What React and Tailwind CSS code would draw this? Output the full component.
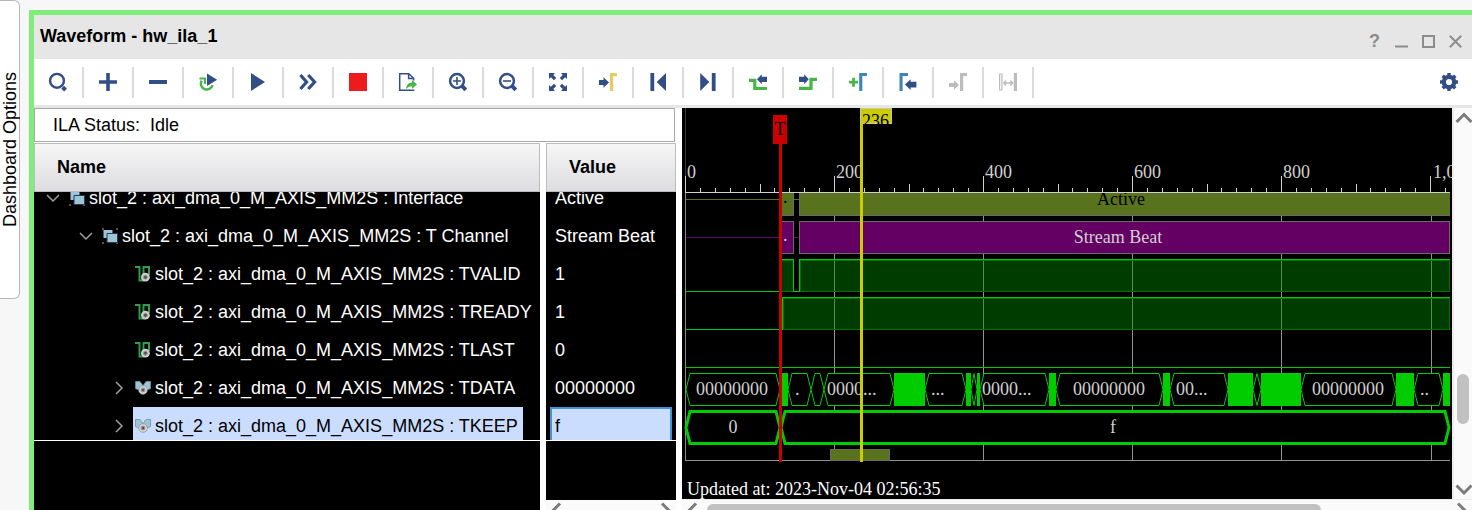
import React from "react";

const NAVY = "#324e86";
const GREEN = "#47b649";
const GRAY = "#bcbcbc";

function Glyph({ children }) {
  return (
    <svg viewBox="0 0 20 20" className="h-5 w-5" fill="none" aria-hidden="true">
      {children}
    </svg>
  );
}

const tools = [
  ["Find", <><circle cx="9" cy="8.8" r="6.9" stroke={NAVY} strokeWidth="2.4" /><path d="M14.6 15.200l3 2.800" stroke={NAVY} strokeWidth="4" /></>],
  ["Add", <path d="M1 10H19M10 1V19" stroke={NAVY} strokeWidth="3.6" />],
  ["Remove", <path d="M1 10H19" stroke={NAVY} strokeWidth="4" />],
  ["Run trigger repeatedly", <><path d="M3.600 8.600A6 6 0 1 0 14.6 13.2" stroke={GREEN} strokeWidth="2.4" /><path d="M1.5 6.6H7V12" stroke={GREEN} strokeWidth="2" /><path d="M9 1.5L19.2 7.7L9 14z" fill={NAVY} /></>],
  ["Run trigger", <path d="M3 1L17 10L3 19z" fill={NAVY} />],
  ["Run immediately", <path d="M2.4 3L8.6 10L2.4 17M10.2 3L16.6 10L10.2 17" stroke={NAVY} strokeWidth="3.2" />],
  ["Stop", <path d="M1 1H19V19H1z" fill="#ed1c1c" />],
  ["Export", <><path d="M15.6 8.5V6.2L10.8 1.7H1.7V18.3H15.6V17.4M10.6 2V6.6H15.4" stroke={NAVY} strokeWidth="1.5" /><path d="M8 17.2c.3-4 2.4-6.4 6-6.6V8l5 4.6-5 4.2v-2.6c-2.600 0-4.300.9-6 3z" fill={GREEN} /></>],
  ["Zoom in", <><circle cx="9" cy="9" r="6.900" stroke={NAVY} strokeWidth="2.500" /><path d="M5 9H13M9 5V13" stroke={NAVY} strokeWidth="1.6" /><path d="M14.2 14.2l3.600 3.600" stroke={NAVY} strokeWidth="4" /></>],
  ["Zoom out", <><circle cx="9" cy="9" r="6.900" stroke={NAVY} strokeWidth="2.500" /><path d="M5 9H13" stroke={NAVY} strokeWidth="1.6" /><path d="M14.2 14.2l3.600 3.600" stroke={NAVY} strokeWidth="4" /></>],
  ["Zoom fit", <path d="M1 1H7L5.300 2.900L8.300 5.900L5.900 8.300L2.900 5.300L1 7zM19 1V7L17.100 5.300L14.100 8.300L11.700 5.900L14.700 2.900L13 1zM1 19V13L2.900 14.700L5.900 11.700L8.300 14.100L5.300 17.100L7 19zM19 19H13L14.700 17.100L11.700 14.100L14.100 11.700L17.100 14.700L19 13z" fill={NAVY} />],
  ["Go to cursor", <><path d="M1 8H5.500V5.200L11 10.500L5.500 15.800V13H1z" fill={NAVY} /><path d="M12 1H19V4.300H15.200V19H12z" fill="#e5cb66" /></>],
  ["Go to start", <path d="M2.400 1H6.200V19H2.400zM18 1V19L8.700 10z" fill={NAVY} />],
  ["Go to end", <path d="M13.800 1H17.600V19H13.800zM2.200 1V19L11.300 10z" fill={NAVY} />],
  ["Previous transition", <><path d="M1 8.300H6.800V16.500H19" stroke={GREEN} strokeWidth="3.2" /><path d="M9 7.300L13.800 2.300V4.800H19V10H13.800V12.300z" fill={NAVY} /></>],
  ["Next transition", <><path d="M1 16.400H13V7.400H19" stroke={GREEN} strokeWidth="3.2" /><path d="M10.800 7.300L6.200 2.300V4.800H1V10H6.200V12.300z" fill={NAVY} /></>],
  ["Add marker", <><path d="M1 10.200H10M5.500 5.700V14.700" stroke={GREEN} strokeWidth="2.800" /><path d="M11.200 1H19V4H14.300V19H11.200z" fill="#3a86bb" /></>],
  ["Previous marker", <><path d="M1.500 1H10V4H4.600V19H1.500z" fill="#3a86bb" /><path d="M7 12.600L12.600 7.200V9.800H18.400V15.400H12.600V18z" fill={NAVY} /></>],
  ["Next marker", <><path d="M1 11H6V8.300L11 13L6 17.700V15H1z" fill={GRAY} /><path d="M12 1H19V4H15.200V19H12z" fill={GRAY} /></>],
  ["Swap cursors", <><path d="M1.600 2H3.900V18H1.600z" stroke={GRAY} strokeWidth="1.2" /><path d="M15.800 1H19V19H15.800z" fill={GRAY} /><path d="M6 11H14.500M8.200 8.500L5.700 11L8.200 13.500M12.300 8.500L14.800 11L12.300 13.500" stroke={GRAY} strokeWidth="1.300" /></>],
];

function GroupIcon() {
  return (
    <svg viewBox="0 0 16 16" className="h-4 w-4 shrink-0" aria-hidden="true">
      <path d="M0 0h2v2H0zM14 0h2v2h-2zM0 14h2v2H0zM14 14h2v2h-2z" fill="#555" />
      <path d="M1.500 2h9v8h-9z" fill="#9cc5dc" />
      <path d="M5 5.500h10.500v9H5z" fill="#9cc5dc" stroke="#263a4a" />
    </svg>
  );
}

function SignalIcon() {
  return (
    <svg viewBox="0 0 16 16" className="h-4 w-4 shrink-0" fill="none" aria-hidden="true">
      <path d="M0 1H4.500V14.500H8.500V1H14V9" stroke="#2f9e48" strokeWidth="2" />
      <circle cx="10.400" cy="11.200" r="4.400" fill="#cfcfcf" />
      <circle cx="10.400" cy="11.200" r="2" fill="#555" stroke="#999" />
    </svg>
  );
}

function BusIcon() {
  return (
    <svg viewBox="0 0 16 16" className="h-4 w-4 shrink-0" aria-hidden="true">
      <path d="M.5 1.500H5L7.500 5V9.500H2.500L.5 8.500zM15.500 1.500H11L8.500 5V9.500H13.500L15.500 8.500z" fill="#9cc5dc" stroke="#6f8e9c" strokeWidth=".8" />
      <circle cx="8" cy="10" r="4.400" fill="#d2d2d2" stroke="#8a8a8a" strokeWidth=".6" />
      <circle cx="8" cy="10" r="1.900" fill="#555" stroke="#999" />
    </svg>
  );
}

const BUS = "slot_2 : axi_dma_0_M_AXIS_MM2S : ";
const signals = [
  { name: BUS + "Interface", value: "Active", indent: "pl-[9px]", open: true, Icon: GroupIcon },
  { name: BUS + "T Channel", value: "Stream Beat", indent: "pl-[42px]", open: true, Icon: GroupIcon },
  { name: BUS + "TVALID", value: "1", indent: "pl-[75px]", Icon: SignalIcon },
  { name: BUS + "TREADY", value: "1", indent: "pl-[75px]", Icon: SignalIcon },
  { name: BUS + "TLAST", value: "0", indent: "pl-[75px]", Icon: SignalIcon },
  { name: BUS + "TDATA", value: "00000000", indent: "pl-[75px]", open: false, Icon: BusIcon },
  { name: BUS + "TKEEP", value: "f", indent: "pl-[75px]", open: false, selected: true, Icon: BusIcon },
];

function Toggle({ open, name }) {
  if (open === undefined) return <span className="w-5 shrink-0" />;
  return (
    <button className="flex w-5 shrink-0 justify-center" aria-label={"Toggle " + name} aria-expanded={open}>
      <svg viewBox="0 0 14 14" className="h-[14px] w-[14px]" fill="none" stroke="#a0a0a0" strokeWidth="1.500" aria-hidden="true">
        <path d={open ? "M1 4L7 10L13 4" : "M4 1L10 7L4 13"} />
      </svg>
    </button>
  );
}

function ColumnHead({ children }) {
  return (
    <div className="h-[49px] shrink-0 border border-[#bdbdbd] bg-linear-to-b from-[#f6f6f6] to-[#dddce0] px-[22px] font-bold leading-[47px]">
      {children}
    </div>
  );
}

function Arrow({ d }) {
  return (
    <svg viewBox="0 0 20 20" className="h-5 w-5 shrink-0" fill="none" stroke="#7b7b7b" strokeWidth="3" aria-hidden="true">
      <path d={d} />
    </svg>
  );
}

const LEFT = "M14 3.500L6.500 11L14 18.500";
const RIGHT = "M6 3.500L13.500 11L6 18.500";

function NamePanel() {
  return (
    <section className="flex min-h-0 w-[506px] flex-col">
      <ColumnHead>Name</ColumnHead>
      <div className="flex min-h-0 grow flex-col bg-black text-white">
        <ul className="h-[249px] overflow-hidden border-b border-white">
          {signals.map(({ name, indent, open, selected, Icon }) => (
            <li key={name} className={"flex h-[38px] items-center gap-1 first:-mt-[13px] " + indent}>
              <Toggle open={open} name={name} />
              <span className={"flex h-full items-center gap-1 whitespace-nowrap pl-[2px] pr-[5px] " + (selected ? "bg-[#cbddff] text-black" : "")}>
                <Icon />
                {name}
              </span>
            </li>
          ))}
        </ul>
      </div>
    </section>
  );
}

function ValuePanel() {
  return (
    <section className="flex min-h-0 w-[130px] flex-col">
      <ColumnHead>Value</ColumnHead>
      <div className="min-h-0 grow bg-black text-white">
        <ul className="h-[249px] overflow-hidden border-b border-white">
          {signals.map(({ name, value, selected }) => (
            <li
              key={name}
              className={
                "mx-1 flex h-[38px] items-center whitespace-nowrap first:-mt-[13px] " +
                (selected ? "border-2 border-[#4094d4] bg-[#cbddff] pl-[3px] text-black" : "pl-[5px]")
              }
            >
              {value}
            </li>
          ))}
        </ul>
      </div>
      <div className="flex h-[10px] shrink-0 items-start justify-between overflow-hidden bg-[#fafafa]">
        <Arrow d={LEFT} />
        <Arrow d={RIGHT} />
      </div>
    </section>
  );
}

const majors = [[3, "0"], [152, "200"], [301, "400"], [450, "600"], [599, "800"], [749, "1,000"]];
const ticks = Array.from({ length: 52 }, (_, i) => i);
// [start, end, label, label start]
const dataCells = [
  [4, 98, "00000000", 14], [106, 129, ".", 113], [129, 142, ""], [142, 212, "0000...", 145], [243, 284, "...", 249],
  [289, 295, ""], [298, 367, "0000...", 300], [374, 481, "00000000", 391], [488, 546, "00...", 494], [571, 579, ""],
  [619, 714, "00000000", 630], [732, 761, "..", 738],
];
const dataBusy = [[100, 106], [212, 243], [284, 289], [295, 298], [367, 374], [481, 488], [546, 571], [579, 619], [714, 732], [761, 768]];

function hex(a, b, top, bottom, slant) {
  const s = Math.min(slant, (b - a) / 2);
  const mid = (top + bottom) / 2;
  return `M${a} ${mid}L${a + s} ${top}H${b - s}L${b} ${mid}L${b - s} ${bottom}H${a + s}z`;
}

function Waves() {
  return (
    <svg width="770" height="391" viewBox="0 0 770 391" className="block shrink-0" fontFamily='"Liberation Serif", serif' fontSize="18" role="img" aria-label="Waveform">
      <defs>
        <clipPath id="rows"><path d="M0 85H770V391H0z" /></clipPath>
        <clipPath id="flag"><path d="M178 0H210V16H178z" /></clipPath>
      </defs>
      <g shapeRendering="crispEdges">
        <path d="M3 0H4V68H3z" fill="#383838" />
        <path d="M3 68H4V352H3z" fill="#8a8a8a" />
        {majors.slice(1).map(([x]) => <rect key={x} x={x} y="85" width="1" height="267" fill="#929292" />)}
        <path d="M3 352H768V353H3z" fill="#929292" />
        {ticks.map((i) => (
          <rect key={i} x={Math.round(3 + i * 14.9)} y={i % 10 === 0 ? 68 : i % 5 === 0 ? 76 : 80} width="1" height={i % 10 === 0 ? 16 : i % 5 === 0 ? 8 : 4} fill="#d0d0d0" />
        ))}
        <path d="M3 84H768V85H3z" fill="#d0d0d0" />

        <path d="M4 91H117V92H4z" fill="#58721d" />
        <path d="M99 85H111V108H99zM117 85H768V108H117z" fill="#58721d" />
        <path d="M111 85h1v23h-1zM99 107H112V108H99zM117 85h1v23h-1zM117 107H768V108H117z" fill="#6a6a6a" />

        <path d="M4 129H117V130H4z" fill="#640064" />
        <path d="M99 113H112V146H99zM117 113H768V146H117z" fill="#6a6a6a" />
        <path d="M100 114H111V145H100zM118 114H767V145H118z" fill="#640064" />

        <path d="M99 151H111V184H99zM118 151H768V184H118zM101 189H768V222H101z" fill="#003c00" />
        {majors.slice(1).map(([x]) => <path key={x} d={`M${x} 153h1v30h-1zM${x} 191h1v30h-1z`} fill="#4f8f4f" />)}
        <path d="M99 152H111V153H99zM118 152H768V153H118zM99 183H111V184H99zM118 183H768V184H118zM101 190H768V191H101zM101 221H768V222H101zM118 153h1v30h-1zM101 191h1v30h-1zM767 152h1v32h-1zM767 190h1v32h-1z" fill="#007000" />
        <path d="M4 183H99V184H4zM99 151H112V152H99zM111 151H112V184H111zM111 183H118V184H111zM117 151H118V184H117zM117 151H768V152H117z" fill="#00cc00" />
        <path d="M4 221H101V222H4zM100 189H101V222H100zM100 189H768V190H100zM4 259H768V260H4z" fill="#00cc00" />

        {dataBusy.map(([a, b]) => <rect key={a} x={a} y="265" width={b - a} height="33" fill="#00cc00" />)}
      </g>
      {dataCells.map(([a, b]) => <path key={a} d={hex(a, b, 265.5, 297.5, 4)} fill="#000" stroke="#00cc00" />)}
      <path d={hex(4, 98, 303.5, 335.5, 4)} fill="#000" stroke="#00cc00" strokeWidth="3" />
      <path d={hex(99, 767, 303.5, 335.5, 4)} fill="#000" stroke="#00cc00" strokeWidth="3" />
      <path d="M148.500 341.500H207.500V352.500H148.500z" fill="#58721d" stroke="#6a6a6a" shapeRendering="crispEdges" />

      <g fill="#d0d0d0">
        {majors.map(([x, label]) => <text key={x} x={x + 2} y="70">{label}</text>)}
        <text x="101" y="133">.</text>
        <text x="436" y="135" textAnchor="middle">Stream Beat</text>
        {dataCells.filter((cell) => cell[2]).map(([a, , label, x]) => <text key={a} x={x} y="287">{label}</text>)}
        <text x="51" y="325" textAnchor="middle">0</text>
        <text x="431" y="325" textAnchor="middle">f</text>
      </g>
      <g clipPath="url(#rows)">
        <text x="101" y="95">.</text>
        <text x="439" y="97" textAnchor="middle">Active</text>
      </g>
      <text x="5" y="387" fill="#fff">Updated at: 2023-Nov-04 02:56:35</text>

      <path d="M91 7H105V36H100V354H97V36H91z" fill="#cc0000" />
      <text x="98" y="27" textAnchor="middle">T</text>
      <path d="M178 0H210V16H181V354H178z" fill="#cccc00" />
      <path d="M178.500 16V.5H209.500V15.500H181" fill="none" stroke="#c8c8a0" />
      <text x="180" y="19" clipPath="url(#flag)">236</text>
    </svg>
  );
}

function WavePanel() {
  return (
    <section className="flex min-w-0 flex-1 flex-col">
      <div className="flex min-h-0 grow">
        <div className="min-w-0 flex-1 overflow-hidden bg-black">
          <Waves />
        </div>
        <div className="flex w-5 flex-col items-center border-l-2 border-[#ececec] bg-[#fafafa]">
          <Arrow d="M3.500 14L11 6.500L18.500 14" />
          <div className="flex-[9]" />
          <div className="h-[50px] w-3 rounded-md bg-[#c1c1c1]" />
          <div className="flex-[2]" />
          <Arrow d="M3.500 6.500L11 14L18.500 6.500" />
        </div>
      </div>
      <div className="flex h-[11px] shrink-0 items-start overflow-hidden border-t border-[#ececec] bg-[#fafafa]">
        <Arrow d={LEFT} />
        <div className="min-w-0 flex-1 px-[5px] pt-1">
          <div className="h-3 w-[83%] rounded-md bg-[#c1c1c1]" />
        </div>
        <Arrow d={RIGHT} />
      </div>
    </section>
  );
}

const windowButtons = [
  ["Minimize", <path d="M0 11.500H13" strokeWidth="2" />],
  ["Maximize", <path d="M1 1H12V12H1z" strokeWidth="2" />],
  ["Close", <path d="M.8.8L12.200 12.200M12.200.8L.8 12.200" strokeWidth="2" />],
];

export default function App() {
  return (
    <div className="flex h-screen items-stretch overflow-hidden bg-[#f7f7f7] text-[18px] leading-5 text-black [font-family:'Liberation_Sans',Arial,sans-serif]">
      <aside className="w-5 shrink-0">
        <button className="flex w-5 items-center justify-center rounded-r-md border border-l-0 border-[#b8b8b8] bg-white py-[71px]">
          <span className="rotate-180 whitespace-nowrap leading-[18px] [writing-mode:vertical-rl]">Dashboard Options</span>
        </button>
      </aside>

      <main className="ml-[9px] mt-[10px] flex min-w-0 flex-1 flex-col border-l-[5px] border-t-[5px] border-[#80ed7a] bg-white">
        <header className="flex h-11 shrink-0 items-center bg-[#e6e6e6] pl-[6px] pr-[10px]">
          <h1 className="flex-1 pb-[2px] font-bold">Waveform - hw_ila_1</h1>
          <div className="flex items-center gap-[14px] pt-2">
            <button aria-label="Help" className="w-[13px] text-center font-bold text-[#8c8c8c]">?</button>
            {windowButtons.map(([label, shape]) => (
              <button key={label} aria-label={label}>
                <svg viewBox="0 0 13 13" className="h-[13px] w-[13px]" fill="none" stroke="#8c8c8c" aria-hidden="true">{shape}</svg>
              </button>
            ))}
          </div>
        </header>

        <div role="toolbar" aria-label="Waveform tools" className="flex h-[49px] shrink-0 items-center border-b-[3px] border-[#e6e6e6] pr-[13px]">
          {tools.map(([label, shape]) => (
            <button key={label} aria-label={label} className="flex h-[31px] w-[50px] items-center justify-center border-r-2 border-[#dbdbdb]">
              <Glyph>{shape}</Glyph>
            </button>
          ))}
          <button aria-label="Settings" className="ml-auto">
            <Glyph>
              <circle cx="10" cy="10" r="5.200" stroke={NAVY} strokeWidth="4.200" />
              <path d="M10 1V4M10 16V19M1 10H4M16 10H19M3.700 3.700L5.800 5.800M14.200 14.200L16.300 16.300M3.700 16.300L5.800 14.200M14.200 5.800L16.300 3.700" stroke={NAVY} strokeWidth="3.400" />
            </Glyph>
          </button>
        </div>

        <div className="flex min-h-0 flex-1 gap-[6px]">
          <div className="flex min-h-0 shrink-0 flex-col gap-px">
            <div className="mr-px h-[34px] shrink-0 border border-[#a8a8a8] px-[18px] leading-8">ILA Status:&nbsp; Idle</div>
            <div className="flex min-h-0 flex-1 gap-[6px]">
              <NamePanel />
              <ValuePanel />
            </div>
          </div>
          <WavePanel />
        </div>
      </main>
    </div>
  );
}
